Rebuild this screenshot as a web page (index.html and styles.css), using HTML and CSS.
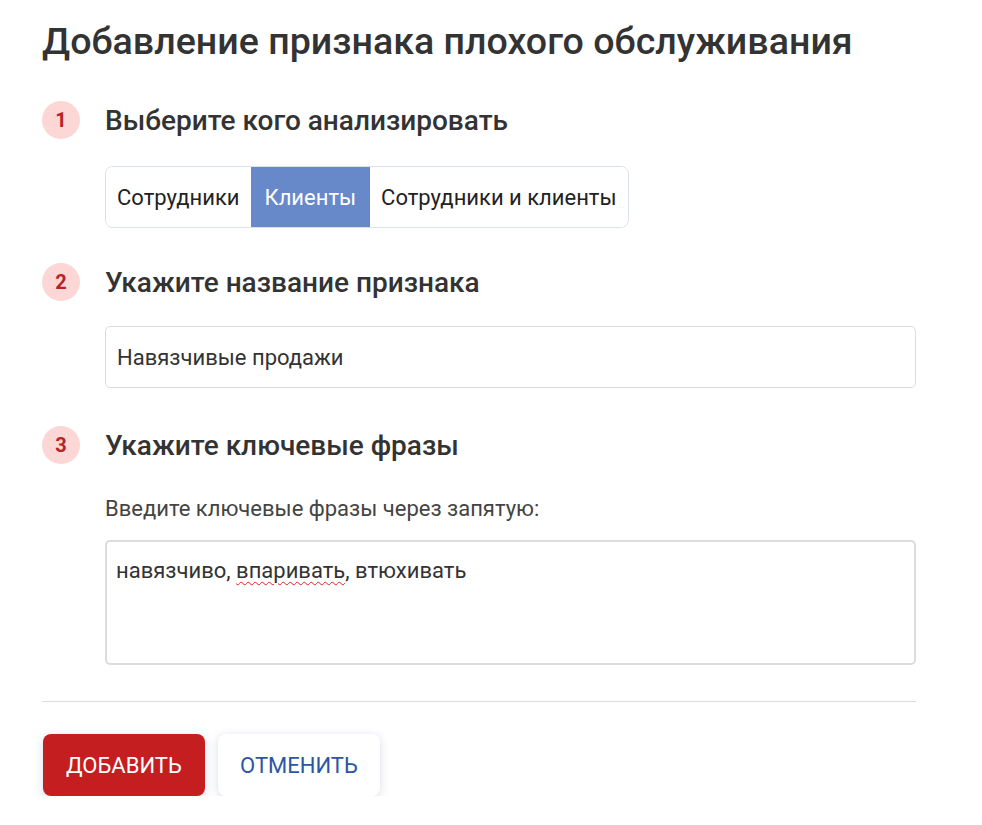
FILE: index.html
```html
<!DOCTYPE html>
<html lang="ru">
<head>
<meta charset="utf-8">
<title>Добавление признака</title>
<link rel="stylesheet" href="styles.css">
</head>
<body>
<main class="page">
  <h1 class="title">Добавление признака плохого обслуживания</h1>

  <section class="step step-first">
    <div class="step-head">
      <span class="step-num">1</span>
      <h2 class="step-title">Выберите кого анализировать</h2>
    </div>
    <div class="step-body step-body-seg">
      <div class="segmented">
        <button class="seg">Сотрудники</button>
        <button class="seg seg-active">Клиенты</button>
        <button class="seg">Сотрудники и клиенты</button>
      </div>
    </div>
  </section>

  <section class="step">
    <div class="step-head">
      <span class="step-num">2</span>
      <h2 class="step-title">Укажите название признака</h2>
    </div>
    <div class="step-body">
      <div class="field">Навязчивые продажи</div>
    </div>
  </section>

  <section class="step step-third">
    <div class="step-head">
      <span class="step-num">3</span>
      <h2 class="step-title">Укажите ключевые фразы</h2>
    </div>
    <div class="step-body step-body-label">
      <p class="label">Введите ключевые фразы через запятую:</p>
      <div class="textarea">навязчиво, <span class="misspelled">впаривать</span>, втюхивать</div>
    </div>
  </section>

  <hr class="divider">

  <div class="actions">
    <button class="btn btn-primary">ДОБАВИТЬ</button>
    <button class="btn btn-secondary">ОТМЕНИТЬ</button>
  </div>
</main>
</body>
</html>
```

FILE: styles.css
```css
* { box-sizing: border-box; }
html, body { margin: 0; padding: 0; background: #fff; }
body {
  font-family: Roboto, "Liberation Sans", sans-serif;
  color: #333;
}
.page {
  width: 874px;
  margin-left: 42px;
  padding-top: 17px;
}
.title {
  margin: 0;
  font-size: 37.6px;
  font-weight: 500;
  line-height: 48px;
  color: #333;
}
.step { margin-top: 34px; }
.step-first { margin-top: 35px; }
.step-third { margin-top: 37px; }
.step-head {
  display: flex;
  align-items: center;
  height: 40px;
}
.step-num {
  width: 38px;
  height: 38px;
  border-radius: 50%;
  background: #fdd6d6;
  color: #b3232a;
  font-weight: 700;
  font-size: 20px;
  display: flex;
  align-items: center;
  justify-content: center;
  flex: none;
}
.step-title {
  margin: 0 0 0 25px;
  font-size: 28px;
  font-weight: 500;
  color: #333;
}
.step-body {
  padding-left: 63px;
  margin-top: 24px;
}
.step-body-seg { margin-top: 26px; }
.step-body-label { margin-top: 31px; }
.segmented {
  display: inline-flex;
  border: 1px solid #dbe2ec;
  border-radius: 8px;
  overflow: hidden;
  height: 62px;
}
.seg {
  font: inherit;
  font-size: 22px;
  border: 0;
  background: #fff;
  color: #222;
  padding: 0 11px;
  cursor: pointer;
}
.seg-active {
  background: #6788c9;
  color: #fff;
  padding: 0 14px;
}
.field {
  height: 62px;
  border: 1px solid #dcdcdc;
  border-radius: 5px;
  padding: 0 11px;
  display: flex;
  align-items: center;
  font-size: 22px;
  color: #333;
}
.label {
  margin: 0 0 18px;
  font-size: 22px;
  color: #444;
  line-height: 26px;
}
.textarea {
  height: 125px;
  border: 2px solid #dcdcdc;
  border-radius: 5px;
  padding: 16px 9px;
  font-size: 22px;
  color: #333;
}
.misspelled {
  text-decoration: underline wavy #e02020;
  text-decoration-thickness: 1px;
  text-underline-offset: 3px;
}
.divider {
  border: 0;
  border-top: 1px solid #dcdcdc;
  margin: 36px 0 0;
}
.actions {
  display: flex;
  gap: 13px;
  margin-top: 32px;
  padding-left: 1px;
}
.btn {
  font: inherit;
  font-size: 22px;
  height: 62px;
  width: 162px;
  border: 0;
  border-radius: 8px;
  cursor: pointer;
  box-shadow: 0 2px 10px rgba(40, 60, 120, 0.18);
}
.btn-primary {
  background: #c41e20;
  color: #fff;
}
.btn-secondary {
  background: #fff;
  color: #2c55a3;
}
```
